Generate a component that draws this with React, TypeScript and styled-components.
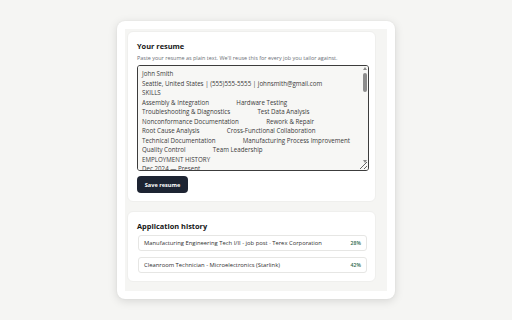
import React from 'react';
import styled, { createGlobalStyle } from 'styled-components';

const GlobalStyle = createGlobalStyle`
  html, body {
    margin: 0;
    padding: 0;
    background: #f5f5f3;
    font-family: "Open Sans", "Noto Sans", sans-serif;
  }
`;

const Page = styled.div`
  width: 512px;
  height: 320px;
  display: flex;
  justify-content: center;
  align-items: flex-start;
  padding-top: 21px;
  box-sizing: border-box;
`;

const Popup = styled.div`
  width: 278px;
  height: 278px;
  box-sizing: border-box;
  background: #ffffff;
  border-radius: 8px;
  box-shadow: 0 2px 10px rgba(0, 0, 0, 0.13), 0 0 2px rgba(0, 0, 0, 0.06);
  padding: 8px;
`;

const Scroller = styled.div`
  height: 262px;
  box-sizing: border-box;
  background: #f5f5f3;
  padding: 2px 11px 2px 2px;
  display: flex;
  flex-direction: column;
  gap: 9px;
  overflow: hidden;
`;

const Section = styled.section`
  background: #ffffff;
  border-radius: 6px;
  border: 1px solid #efefed;
  padding: 9px 8px 8px 9px;
  display: flex;
  flex-direction: column;
`;

const Title = styled.h2`
  margin: 0;
  font-size: 7.4px;
  line-height: 10px;
  font-weight: 700;
  color: #151515;
`;

const Hint = styled.p`
  margin: 3px 0 3px;
  font-size: 5.45px;
  line-height: 8px;
  color: #6b6f76;
`;

const EditorWrap = styled.div`
  position: relative;
  width: 232px;
  height: 106px;
`;

const ResumeBox = styled.textarea`
  display: block;
  width: 100%;
  height: 100%;
  box-sizing: border-box;
  margin: 0;
  padding: 3px 12px 3px 4px;
  border: 1px solid #3c3c3c;
  border-radius: 3px;
  background: #f7f7f5;
  color: #3a3a3a;
  font-family: "Open Sans", "Noto Sans", sans-serif;
  font-size: 6.2px;
  line-height: 9.5px;
  white-space: pre-wrap;
  outline: none;
  resize: vertical;
  scrollbar-width: none;
`;

const FakeScrollbar = styled.div`
  position: absolute;
  top: 2px;
  right: 1px;
  bottom: 8px;
  width: 6px;
  display: flex;
  flex-direction: column;
  align-items: center;
  pointer-events: none;
`;

const Arrow = styled.div<{ $down?: boolean }>`
  width: 0;
  height: 0;
  border-left: 2.5px solid transparent;
  border-right: 2.5px solid transparent;
  ${(p) => (p.$down ? 'border-top: 3px solid #8a8a8a;' : 'border-bottom: 3px solid #8a8a8a;')}
  margin: ${(p) => (p.$down ? 'auto 0 0' : '0')};
`;

const Thumb = styled.div`
  margin-top: 3px;
  width: 3.5px;
  height: 19px;
  border-radius: 2px;
  background: #8c8c8c;
`;

const SaveButton = styled.button`
  align-self: flex-start;
  margin-top: 5px;
  width: 51px;
  height: 17px;
  padding: 0;
  border: none;
  border-radius: 4px;
  background: #1d2432;
  color: #ffffff;
  font-family: "Open Sans", "Noto Sans", sans-serif;
  font-size: 5.6px;
  font-weight: 700;
  cursor: pointer;
`;

const HistoryList = styled.div`
  display: flex;
  flex-direction: column;
  gap: 6px;
  margin-top: 4px;
  padding-left: 1px;
`;

const HistoryRow = styled.div`
  height: 16px;
  box-sizing: border-box;
  border: 1px solid #e6e6e4;
  border-radius: 3px;
  padding: 0 5px;
  display: flex;
  align-items: center;
  justify-content: space-between;
  font-size: 5.85px;
  color: #2f2f2f;
`;

const Score = styled.span`
  color: #2e6a4e;
  font-weight: 600;
  font-size: 5.2px;
`;

const pad = '                 ';

const resumeText = [
  'John Smith',
  'Seattle, United States | (555)555-5555 | johnsmith@gmail.com',
  'SKILLS',
  `Assembly & Integration${pad}Hardware Testing`,
  `Troubleshooting & Diagnostics${pad}Test Data Analysis`,
  `Nonconformance Documentation${pad}Rework & Repair`,
  `Root Cause Analysis${pad}Cross-Functional Collaboration`,
  `Technical Documentation${pad}Manufacturing Process Improvement`,
  `Quality Control${pad}Team Leadership`,
  'EMPLOYMENT HISTORY',
  'Dec 2024 — Present',
  'Manufacturing Technician, Terex Corporation — Redmond',
  'Assembled and tested electromechanical sub-assemblies to spec.',
  'Performed root cause analysis on recurring production defects.',
  'Documented nonconformances and coordinated rework with QA.',
  'Jun 2021 — Nov 2024',
  'Production Associate, Pacific Electronics — Seattle',
  'Operated test fixtures and logged results in the MES.',
  'Trained new hires on safety and assembly procedures.',
  'Supported continuous improvement projects on the line.',
  'EDUCATION',
  'Associate of Applied Science, Manufacturing Technology',
  'Seattle Central College',
  'CERTIFICATIONS',
  'IPC-A-610 Certified IPC Specialist',
  'OSHA 10 General Industry',
  'Lean Six Sigma Yellow Belt',
  'REFERENCES',
  'Available upon request',
].join('\n');

const history = [
  { title: 'Manufacturing Engineering Tech I/II - job post · Terex Corporation', score: 28 },
  { title: 'Cleanroom Technician - Microelectronics (Starlink)', score: 42 },
];

const App = () => {
  return (
    <>
      <GlobalStyle />
      <Page>
        <Popup>
          <Scroller>
            <Section>
              <Title>Your resume</Title>
              <Hint>Paste your resume as plain text. We'll reuse this for every job you tailor against.</Hint>
              <EditorWrap>
                <ResumeBox defaultValue={resumeText} spellCheck={false} />
                <FakeScrollbar>
                  <Arrow />
                  <Thumb />
                  <Arrow $down />
                </FakeScrollbar>
              </EditorWrap>
              <SaveButton>Save resume</SaveButton>
            </Section>
            <Section>
              <Title>Application history</Title>
              <HistoryList>
                {history.map((item) => (
                  <HistoryRow key={item.title}>
                    <span>{item.title}</span>
                    <Score>{item.score}%</Score>
                  </HistoryRow>
                ))}
              </HistoryList>
            </Section>
          </Scroller>
        </Popup>
      </Page>
    </>
  );
};

export default App;
